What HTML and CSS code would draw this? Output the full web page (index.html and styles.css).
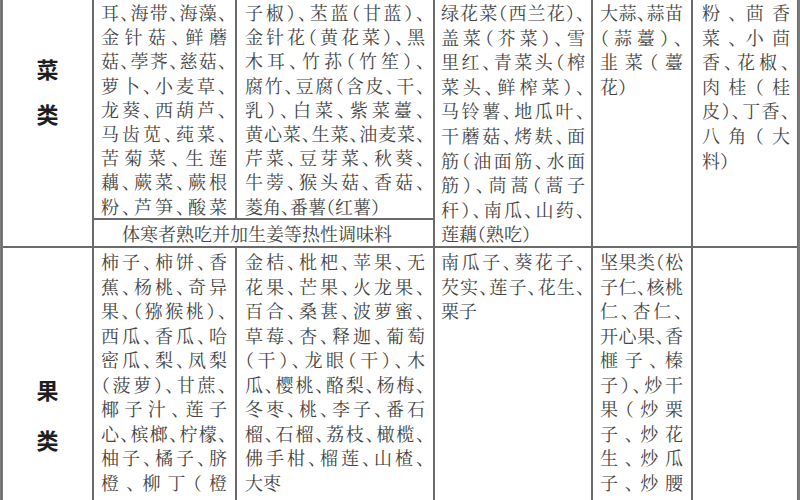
FILE: index.html
```html
<!DOCTYPE html>
<html lang="zh-CN">
<head>
<meta charset="utf-8">
<title>饮食分类表</title>
<link rel="stylesheet" href="styles.css">
</head>
<body>
<div class="table">
  <div class="cell label lab-a"><span>菜</span><span>类</span></div>
  <div class="cell txt c2 ra">
    <div class="l">耳、海带、海藻、</div>
    <div class="l">金针菇、鲜蘑</div>
    <div class="l">菇、荸荠、慈菇、</div>
    <div class="l">萝卜、小麦草、</div>
    <div class="l">龙葵、西葫芦、</div>
    <div class="l">马齿苋、莼菜、</div>
    <div class="l">苦菊菜、生莲</div>
    <div class="l">藕、蕨菜、蕨根</div>
    <div class="l">粉、芦笋、酸菜</div>
  </div>
  <div class="cell txt c3 ra">
    <div class="l">子椒）、苤蓝（甘蓝）、</div>
    <div class="l">金针花（黄花菜）、黑</div>
    <div class="l">木耳、竹荪（竹笙）、</div>
    <div class="l">腐竹、豆腐（含皮、干、</div>
    <div class="l">乳）、白菜、紫菜薹、</div>
    <div class="l">黄心菜、生菜、油麦菜、</div>
    <div class="l">芹菜、豆芽菜、秋葵、</div>
    <div class="l">牛蒡、猴头菇、香菇、</div>
    <div class="l e">菱角、番薯（红薯）</div>
  </div>
  <div class="cell note">体寒者熟吃并加生姜等热性调味料</div>
  <div class="cell txt c4 rab">
    <div class="l">绿花菜（西兰花）、</div>
    <div class="l">盖菜（芥菜）、雪</div>
    <div class="l">里红、青菜头（榨</div>
    <div class="l">菜头、鲜榨菜）、</div>
    <div class="l">马铃薯、地瓜叶、</div>
    <div class="l">干蘑菇、烤麸、面</div>
    <div class="l">筋（油面筋、水面</div>
    <div class="l">筋）、茼蒿（蒿子</div>
    <div class="l">秆）、南瓜、山药、</div>
    <div class="l e">莲藕（熟吃）</div>
  </div>
  <div class="cell txt c5 rab">
    <div class="l">大蒜、蒜苗</div>
    <div class="l">（蒜薹）、</div>
    <div class="l">韭菜（薹</div>
    <div class="l e">花）</div>
  </div>
  <div class="cell txt c6 rab">
    <div class="l">粉、茴香</div>
    <div class="l">菜、小茴</div>
    <div class="l">香、花椒、</div>
    <div class="l">肉桂（桂</div>
    <div class="l">皮）、丁香、</div>
    <div class="l">八角（大</div>
    <div class="l e">料）</div>
  </div>

  <div class="cell label lab-c"><span>果</span><span>类</span></div>
  <div class="cell txt c2 rc">
    <div class="l">柿子、柿饼、香</div>
    <div class="l">蕉、杨桃、奇异</div>
    <div class="l">果、（猕猴桃）、</div>
    <div class="l">西瓜、香瓜、哈</div>
    <div class="l">密瓜、梨、凤梨</div>
    <div class="l">（菠萝）、甘蔗、</div>
    <div class="l">椰子汁、莲子</div>
    <div class="l">心、槟榔、柠檬、</div>
    <div class="l">柚子、橘子、脐</div>
    <div class="l">橙、柳丁（橙</div>
  </div>
  <div class="cell txt c3 rc">
    <div class="l">金桔、枇杷、苹果、无</div>
    <div class="l">花果、芒果、火龙果、</div>
    <div class="l">百合、桑葚、波萝蜜、</div>
    <div class="l">草莓、杏、释迦、葡萄</div>
    <div class="l">（干）、龙眼（干）、木</div>
    <div class="l">瓜、樱桃、酪梨、杨梅、</div>
    <div class="l">冬枣、桃、李子、番石</div>
    <div class="l">榴、石榴、荔枝、橄榄、</div>
    <div class="l">佛手柑、榴莲、山楂、</div>
    <div class="l e">大枣</div>
  </div>
  <div class="cell txt c4 rc">
    <div class="l">南瓜子、葵花子、</div>
    <div class="l">芡实、莲子、花生、</div>
    <div class="l e">栗子</div>
  </div>
  <div class="cell txt c5 rc">
    <div class="l">坚果类（松</div>
    <div class="l">子仁、核桃</div>
    <div class="l">仁、杏仁、</div>
    <div class="l">开心果、香</div>
    <div class="l">榧子、榛</div>
    <div class="l">子）、炒干</div>
    <div class="l">果（炒栗</div>
    <div class="l">子、炒花</div>
    <div class="l">生、炒瓜</div>
    <div class="l">子、炒腰</div>
  </div>
  <div class="cell txt c6 rc"></div>
</div>
</body>
</html>
```

FILE: styles.css
```css
html, body {
  margin: 0;
  padding: 0;
  background: #ffffff;
  overflow: hidden;
  width: 800px;
  height: 500px;
}

.table {
  display: grid;
  width: 795px;
  margin-top: 0;
  grid-template-columns: 89px 141px 196px 156px 98px 104px;
  grid-template-rows: 218px 26px 270px;
  gap: 2px;
  background: #6a6a6a;
  border-left: 3px double #7e7e7e;
  border-right: 2px solid #7a7a7a;
  font-family: "Noto Serif CJK SC", "Noto Sans CJK SC", serif;
}

.cell {
  background: #ffffff;
  box-sizing: border-box;
}

.label {
  display: flex;
  flex-direction: column;
  align-items: center;
  font-family: "Noto Sans CJK SC", sans-serif;
  font-size: 22px;
  font-weight: 700;
  color: #1e1e1e;
}

.lab-a {
  grid-column: 1;
  grid-row: 1 / 3;
  padding-top: 46px;
  line-height: 45px;
}

.lab-c {
  grid-column: 1;
  grid-row: 3;
  padding-top: 116px;
  line-height: 50px;
}

.txt {
  font-size: 18px;
  color: #444444;
  font-feature-settings: "halt";
}

.ra { grid-row: 1; padding-top: 0; line-height: 24.2px; }
.rab { grid-row: 1 / 3; padding-top: 0; line-height: 24.6px; }
.rc { grid-row: 3; padding-top: 1px; line-height: 24.5px; }

.c2 { grid-column: 2; padding-left: 7px; padding-right: 8px; }
.c3 { grid-column: 3; padding-left: 8px; padding-right: 8px; }
.c4 { grid-column: 4; padding-left: 6px; padding-right: 6px; }
.c5 { grid-column: 5; padding-left: 7px; padding-right: 8px; }
.c6 { grid-column: 6; padding-left: 9px; padding-right: 7px; }

.l {
  white-space: nowrap;
  text-align: justify;
  text-align-last: justify;
}

.l.e {
  text-align: left;
  text-align-last: left;
}

.note {
  grid-column: 2 / 4;
  grid-row: 2;
  font-size: 18px;
  line-height: 24.8px;
  color: #444444;
  padding-left: 28px;
  padding-top: 1px;
  white-space: nowrap;
}
```
